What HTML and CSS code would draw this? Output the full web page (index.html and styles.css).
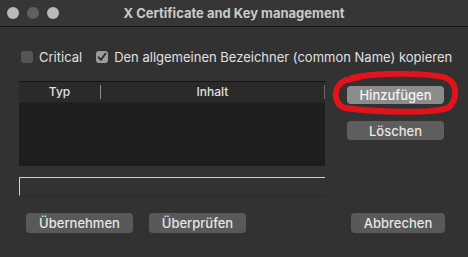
FILE: index.html
```html
<!DOCTYPE html>
<html lang="en">
<head>
  <meta charset="UTF-8">
  <title>X Certificate and Key management</title>
  <link rel="stylesheet" href="styles.css">
</head>
<body>
  <div class="window">
    <div class="titlebar">
      <div class="lights">
        <span class="light"></span>
        <span class="light dim"></span>
        <span class="light"></span>
      </div>
      <div class="title">X Certificate and Key management</div>
    </div>

    <div class="content">
      <div class="options">
        <label class="check"><span class="box"></span>Critical</label>
        <label class="check"><span class="box checked">
          <svg width="12" height="12" viewBox="0 0 12 12"><path d="M2.6 6.3 L5 8.8 L9.4 2.8" fill="none" stroke="#2a2a2a" stroke-width="1.9" stroke-linecap="round" stroke-linejoin="round"/></svg>
        </span>Den allgemeinen Bezeichner (common Name) kopieren</label>
      </div>

      <div class="main">
        <div class="left">
          <div class="table">
            <div class="thead">
              <div class="col typ">Typ</div>
              <div class="col inhalt">Inhalt</div>
            </div>
            <div class="tbody"></div>
          </div>
          <div class="field"></div>
        </div>
        <div class="side">
          <button class="btn default">Hinzufügen</button>
          <button class="btn">Löschen</button>
        </div>
      </div>

      <div class="footer">
        <button class="btn wide">Übernehmen</button>
        <button class="btn">Überprüfen</button>
        <span class="spacer"></span>
        <button class="btn cancel">Abbrechen</button>
      </div>
    </div>

    <!-- red marker drawn around the add button -->
    <svg class="marker" width="468" height="257" viewBox="0 0 468 257">
      <path d="M352 78 C380 72 430 73 446 78 C458 83 458 100 448 108 C430 114 375 112 345 108 C333 104 332 86 346 80 L360 77" fill="none" stroke="#e3131b" stroke-width="6" stroke-linecap="round"/>
    </svg>
  </div>
</body>
</html>
```

FILE: styles.css
```css
body {
  margin: 0;
  background: #2c2c2c;
  font-family: Inter, "Noto Sans", sans-serif;
}

.window {
  position: relative;
  width: 468px;
  height: 257px;
  background: #323232;
  overflow: hidden;
}

.titlebar {
  height: 26px;
  background: #363636;
  border-bottom: 1px solid #141414;
  display: flex;
  align-items: center;
  position: relative;
}

.lights {
  display: flex;
  gap: 8px;
  padding-left: 7px;
}

.light {
  width: 12px;
  height: 12px;
  border-radius: 50%;
  background: #b9b9b9;
}

.light.dim {
  background: #606060;
}

.title {
  position: absolute;
  left: 0;
  right: 0;
  text-align: center;
  font-size: 13px;
  font-weight: 700;
  color: #c9c9c9;
}

.content {
  padding: 24px 23px 0 19px;
}

.options {
  display: flex;
  gap: 14px;
  padding-left: 2px;
  height: 12px;
  align-items: center;
  white-space: nowrap;
}

.check {
  display: flex;
  align-items: center;
  gap: 6px;
  font-size: 13px;
  color: #e0e0e0;
}

.box {
  width: 12px;
  height: 12px;
  border-radius: 3px;
  background: #555;
  display: flex;
  align-items: center;
  justify-content: center;
}

.box.checked {
  background: #9c9c9c;
}

.main {
  display: flex;
  gap: 22px;
  margin-top: 18px;
}

.left {
  width: 306px;
}

.table {
  height: 84px;
  background: #1e1e1e;
  border-top: 1px solid #151515;
  display: flex;
  flex-direction: column;
}

.thead {
  height: 20px;
  background: #2a2a2a;
  border-bottom: 1px solid #222;
  display: flex;
  align-items: center;
  font-size: 12px;
  font-weight: 500;
  color: #e0e0e0;
}

.col {
  text-align: center;
}

.typ {
  width: 81px;
  border-right: 1px solid #8a8a8a;
  height: 14px;
  line-height: 14px;
}

.inhalt {
  flex: 1;
  border-right: 1px solid #666;
  height: 14px;
  line-height: 14px;
}

.tbody {
  flex: 1;
}

.field {
  margin-top: 11px;
  height: 17px;
  border-top: 1px solid #cfcfcf;
  border-left: 1px solid #cfcfcf;
  border-bottom: 1px solid #2a2a2a;
}

.side {
  display: flex;
  flex-direction: column;
  gap: 17px;
  padding-top: 5px;
}

.btn {
  width: 97px;
  height: 18px;
  border: none;
  border-radius: 4px;
  background: #5e5e5e;
  color: #e6e6e6;
  font-family: Inter, "Noto Sans", sans-serif;
  font-size: 13px;
  font-weight: 500;
  padding: 0;
  line-height: 18px;
}

.side .btn + .btn {
  height: 19px;
}

.btn.default {
  background: #8c8c8c;
  color: #f4f4f4;
}

.footer {
  display: flex;
  gap: 16px;
  margin-top: 17px;
  padding-left: 7px;
}

.footer .btn {
  height: 20px;
  background: #595959;
}

.footer .btn.wide {
  width: 107px;
}

.footer .btn.cancel {
  width: 94px;
}

.spacer {
  flex: 1;
}

.marker {
  position: absolute;
  left: 0;
  top: 0;
  pointer-events: none;
}
```
